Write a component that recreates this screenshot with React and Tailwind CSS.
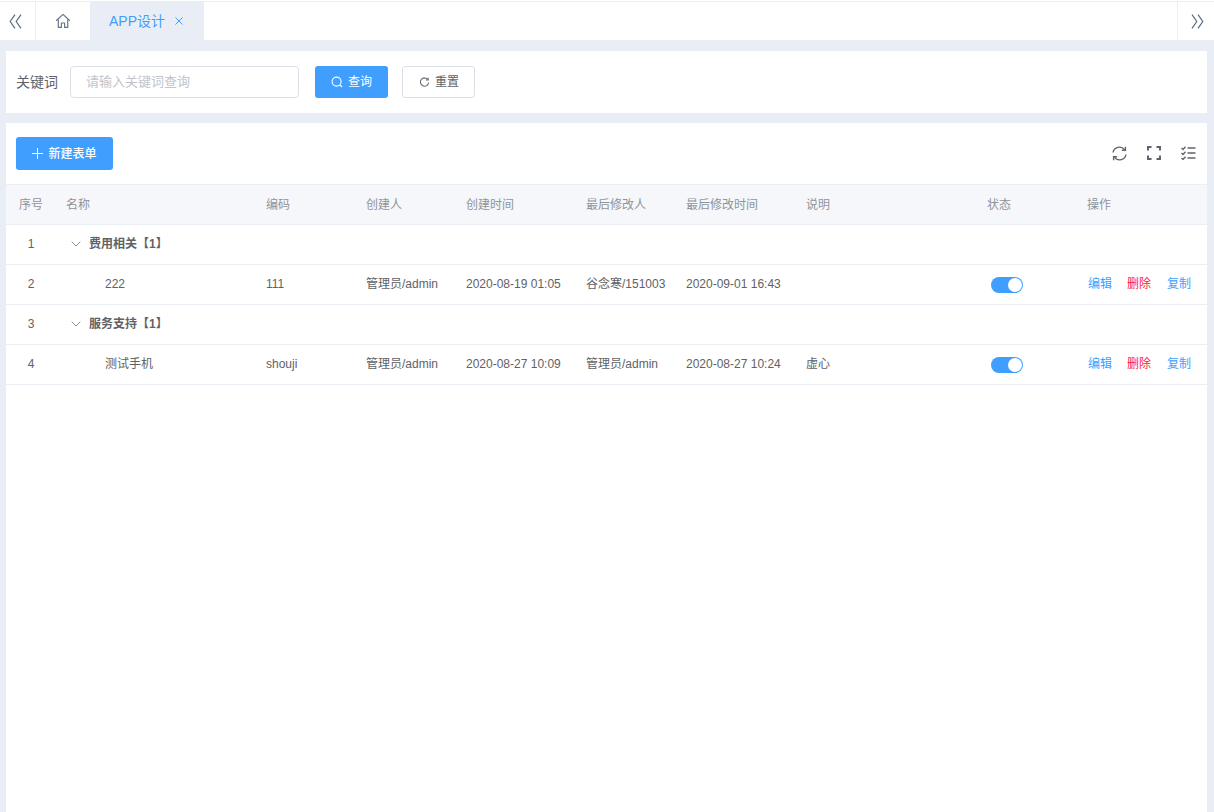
import React from "react";

function ChevL() {
  return (
    <svg width="13" height="15" viewBox="0 0 13 15" fill="none" stroke="#5a6b85" strokeWidth="1.2">
      <path d="M6 0.7 L1.2 7.5 L6 14.3" />
      <path d="M12 0.7 L7.2 7.5 L12 14.3" />
    </svg>
  );
}
function ChevR() {
  return (
    <svg width="13" height="15" viewBox="0 0 13 15" fill="none" stroke="#5a6b85" strokeWidth="1.2">
      <path d="M1 0.7 L5.8 7.5 L1 14.3" />
      <path d="M7 0.7 L11.8 7.5 L7 14.3" />
    </svg>
  );
}
function Home() {
  return (
    <svg width="16" height="16" viewBox="0 0 16 16" fill="none" stroke="#66758c" strokeWidth="1.2" strokeLinejoin="round">
      <path d="M1.2 7.8 L8 1.4 L14.8 7.8" />
      <path d="M3.3 6.4 V14.4 H6.4 V10 H9.6 V14.4 H12.7 V6.4" />
    </svg>
  );
}
function Chevron() {
  return (
    <svg width="10" height="6" viewBox="0 0 10 6" fill="none" stroke="#8a8f99" strokeWidth="1">
      <path d="M0.7 0.7 L5 5 L9.3 0.7" />
    </svg>
  );
}
function Toggle() {
  return (
    <div className="flex h-4 w-8 items-center justify-end rounded-full bg-[#409eff] pr-px">
      <div className="h-[14px] w-[14px] rounded-full bg-white" />
    </div>
  );
}

function Cell({ i, children, className = "" }) {
  const c = [
    "w-[50px] shrink-0 text-center",
    "w-[200px] shrink-0 pl-[10px]",
    "w-[100px] shrink-0 pl-[10px]",
    "w-[100px] shrink-0 pl-[10px]",
    "w-[120px] shrink-0 pl-[10px]",
    "w-[100px] shrink-0 pl-[10px]",
    "w-[120px] shrink-0 pl-[10px]",
    "w-[191px] shrink-0 pl-[10px]",
    "w-[100px] shrink-0",
    "w-[120px] shrink-0",
  ][i];
  return <div className={`${c} ${className} whitespace-nowrap`}>{children}</div>;
}

function GroupRow({ n, title }) {
  return (
    <div className="flex h-10 items-center border-b border-[#ebeef5] pb-[2px] text-xs text-[#606266]">
      <Cell i={0}>{n}</Cell>
      <div className="flex items-center pl-[15px]">
        <Chevron />
        <span className="ml-[8px] font-bold">{title}</span>
      </div>
    </div>
  );
}

function DataRow({ n, name, code, creator, created, modifier, modified, note }) {
  return (
    <div className="flex h-10 items-center border-b border-[#ebeef5] text-xs text-[#606266]">
      <Cell i={0} className="pb-[2px]">{n}</Cell>
      <Cell i={1} className="pb-[2px] !pl-[49px]">{name}</Cell>
      <Cell i={2} className="pb-[2px]">{code}</Cell>
      <Cell i={3} className="pb-[2px]">{creator}</Cell>
      <Cell i={4} className="pb-[2px]">{created}</Cell>
      <Cell i={5} className="pb-[2px]">{modifier}</Cell>
      <Cell i={6} className="pb-[2px]">{modified}</Cell>
      <Cell i={7} className="pb-[2px]">{note}</Cell>
      <Cell i={8} className="pl-[4px]"><Toggle /></Cell>
      <Cell i={9} className="flex pb-[2px] pl-[1px]">
        <span className="text-[#409eff]">编辑</span>
        <span className="ml-[15px] text-[#ff1a33]">删除</span>
        <span className="ml-[16px] text-[#409eff]">复制</span>
      </Cell>
    </div>
  );
}

export default function App() {
  return (
    <div
      className="flex h-[812px] flex-col overflow-hidden bg-[#e9edf5] text-[#606266]"
      style={{ fontFamily: '"Liberation Sans", "Noto Sans CJK SC", sans-serif' }}
    >
      <div className="h-[40px] shrink-0 bg-white pt-px">
        <div className="flex h-full border-t border-[#eeeeee]">
          <div className="flex w-9 items-center justify-center border-r border-[#eeeeee] pr-[5px]"><ChevL /></div>
          <div className="flex w-[54px] items-center justify-center"><Home /></div>
          <div className="flex w-[114px] items-center bg-[#e9edf5] pl-[19px] text-sm text-[#409eff]">
            <span>APP设计</span>
            <svg className="ml-[10px]" width="8" height="8" viewBox="0 0 8 8" stroke="#409eff" strokeWidth="1"><path d="M0.5 0.5 L7.5 7.5 M7.5 0.5 L0.5 7.5" /></svg>
          </div>
          <div className="flex-1" />
          <div className="flex w-[37px] items-center justify-center border-l border-[#eeeeee] pl-[2px]"><ChevR /></div>
        </div>
      </div>

      <div className="ml-[6px] mr-[7px] mt-[11px] flex h-[62px] shrink-0 items-center bg-white px-[10px]">
        <span className="text-sm text-[#606266]">关键词</span>
        <div className="ml-[12px] flex h-8 w-[229px] items-center rounded border border-[#dcdfe6] pl-[15px] text-[13px] text-[#c0c4cc]">请输入关键词查询</div>
        <button className="ml-4 flex h-8 w-[73px] items-center justify-center rounded-[3px] bg-[#409eff] text-xs text-white">
          <svg className="mr-[5px]" width="12" height="12" viewBox="0 0 12 12" fill="none" stroke="#fff" strokeWidth="1.1"><circle cx="5.6" cy="5.6" r="4.5" /><path d="M9 9 L11 11" /></svg>
          查询
        </button>
        <button className="ml-[14px] flex h-8 w-[73px] items-center justify-center rounded-[3px] border border-[#dcdfe6] bg-white pl-px text-xs text-[#606266]">
          <svg className="mr-[5px]" width="11" height="11" viewBox="0 0 12 12" fill="none" stroke="#606266" strokeWidth="1.1"><path d="M9.8 3 A4.5 4.5 0 1 0 10.5 6" /><path d="M10 0.8 V3.3 H7.6" /></svg>
          重置
        </button>
      </div>

      <div className="ml-[6px] mr-[7px] mt-[10px] flex-1 bg-white">
        <div className="flex h-[62px] items-center justify-between border-b border-[#ebeef5] pb-px pl-[10px] pr-[11px]">
          <button className="flex h-[33px] w-[97px] items-center justify-center rounded-[3px] bg-[#409eff] text-xs font-medium text-white">
            <svg className="mr-[5px]" width="11" height="11" viewBox="0 0 11 11" stroke="#fff" strokeWidth="1"><path d="M5.5 0 V11 M0 5.5 H11" /></svg>
            <span className="pt-px">新建表单</span>
          </button>
          <div className="flex items-center gap-[20px]">
            <svg width="15" height="15" viewBox="0 0 15 15" fill="none" stroke="#5f6368" strokeWidth="1.4">
              <path d="M1 6.5 A6.5 6.5 0 0 1 12.5 3.6" />
              <path d="M14 8.5 A6.5 6.5 0 0 1 2.5 11.4" />
              <path d="M13.4 0.8 V4.3 H9.9" />
              <path d="M1.6 14.2 V10.7 H5.1" />
            </svg>
            <svg width="14" height="14" viewBox="0 0 14 14" fill="none" stroke="#5a6068" strokeWidth="1.9">
              <path d="M1 4.5 V1 H4.5 M9.5 1 H13 V4.5 M13 9.5 V13 H9.5 M4.5 13 H1 V9.5" />
            </svg>
            <svg width="15" height="14" viewBox="0 0 15 14" fill="none" stroke="#5f6368" strokeWidth="1.3">
              <path d="M0.5 2 L2 3.5 L4.5 0.7 M0.5 7 L2 8.5 L4.5 5.7 M0.5 12 L2 13.5 L4.5 10.7" />
              <path d="M6.5 2 H14.5 M6.5 7 H14.5 M6.5 12 H14.5" />
            </svg>
          </div>
        </div>

        <div className="flex h-10 items-center border-b border-[#ebeef5] bg-[#f5f7fa] text-xs text-[#909399]">
          {["序号", "名称", "编码", "创建人", "创建时间", "最后修改人", "最后修改时间", "说明", "状态", "操作"].map((t, i) => (
            <Cell key={t} i={i}>{t}</Cell>
          ))}
        </div>

        <GroupRow n="1" title="费用相关【1】" />
        <DataRow n="2" name="222" code="111" creator="管理员/admin" created="2020-08-19 01:05" modifier="谷念寒/151003" modified="2020-09-01 16:43" note="" />
        <GroupRow n="3" title="服务支持【1】" />
        <DataRow n="4" name="测试手机" code="shouji" creator="管理员/admin" created="2020-08-27 10:09" modifier="管理员/admin" modified="2020-08-27 10:24" note="虚心" />
      </div>
    </div>
  );
}
